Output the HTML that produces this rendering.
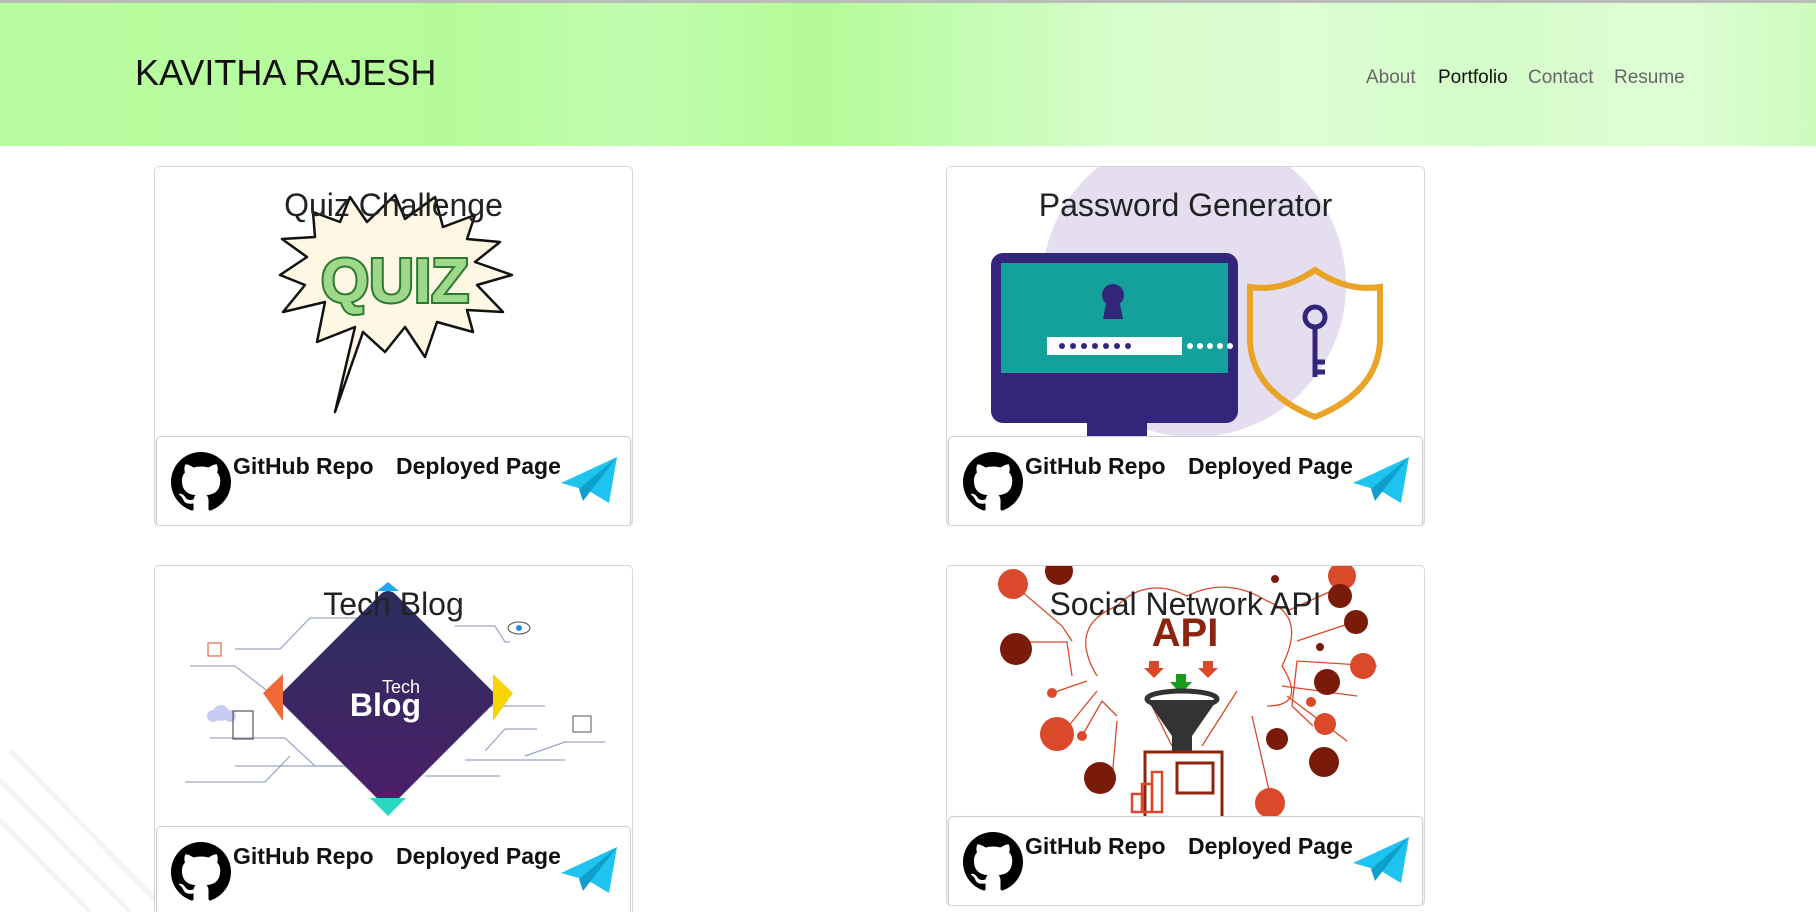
<!DOCTYPE html>
<html><head><meta charset="utf-8"><style>
*{margin:0;padding:0;box-sizing:border-box}
html,body{width:1816px;height:912px;overflow:hidden}
body{background:#fff;font-family:"Liberation Sans","DejaVu Sans",sans-serif;position:relative}
.hdr{position:absolute;left:0;top:0;width:1816px;height:146px;border-top:3px solid #b8bdb8;
background:linear-gradient(90deg,#b8fca0 0%,#b6fb9b 25%,#c2fcae 35%,#b4fb98 45%,#c8fcb8 55%,#d8fdcc 62%,#dcfed2 72%,#d4fcc8 82%,#e0fed6 92%,#cdfbbe 100%)}
.brand{position:absolute;left:135px;top:49px;font-size:36px;color:#111;letter-spacing:0}
.nav{position:absolute;top:64px;font-size:19px;color:#666}
.card{position:absolute;border:1px solid #d6d6d6;border-radius:5px;background:#fff;overflow:hidden}
.card svg.img{position:absolute;left:0;top:0}
.ttl{position:absolute;left:0;width:100%;top:20px;text-align:center;font-size:32px;color:#222}
.ft{position:absolute;left:1px;right:1px;height:91px;border:1px solid #ccc;border-radius:5px;background:#fff;box-shadow:0 1px 2px rgba(0,0,0,.15)}
.ft .gh{position:absolute;left:14px;top:15px}
.ft .t1,.ft .t2{position:absolute;top:16px;font-size:23px;font-weight:bold;color:#111}
.ft .t1{left:76px}.ft .t2{left:239px}
.ft .pl{position:absolute;left:404px;top:20px}
</style></head><body>
<svg width="0" height="0" style="position:absolute"><defs>
<path id="ghp" d="M8 0C3.580 0 0 3.58 0 8c0 3.54 2.29 6.53 5.47 7.59.4.07.55-.17.55-.38 0-.19-.01-.82-.01-1.49-2.01.37-2.53-.49-2.690-.94-.09-.23-.48-.94-.82-1.13-.28-.15-.68-.52-.01-.53.63-.01 1.08.58 1.23.82.72 1.21 1.87.87 2.33.66.07-.52.28-.87.51-1.07-1.78-.2-3.64-.89-3.64-3.95 0-.87.31-1.59.82-2.15-.08-.2-.36-1.02.08-2.12 0 0 .67-.21 2.2.82.64-.18 1.32-.27 2-.27.68 0 1.36.09 2 .27 1.53-1.04 2.2-.82 2.2-.82.44 1.1.16 1.92.08 2.12.51.56.82 1.27.82 2.15 0 3.07-1.87 3.75-3.65 3.95.29.25.54.73.54 1.48 0 1.07-.01 1.93-.01 2.2 0 .21.15.46.55.38A8.013 8.013 0 0016 8c0-4.42-3.58-8-8-8z"/>
</defs></svg>
<div class="hdr">
<div class="brand">KAVITHA RAJESH</div>
<div class="nav" style="left:1366px">About</div>
<div class="nav" style="left:1438px;color:#111">Portfolio</div>
<div class="nav" style="left:1528px">Contact</div>
<div class="nav" style="left:1614px">Resume</div>
</div>

<svg style="position:absolute;left:0;top:740px" width="160" height="172"><g stroke="#eee" stroke-width="5" opacity="0.6">
<line x1="0" y1="40" x2="130" y2="172"/><line x1="0" y1="80" x2="90" y2="172"/><line x1="10" y1="10" x2="160" y2="165"/></g></svg>

<!-- Card 1 -->
<div class="card" style="left:154px;top:166px;width:479px;height:360px">
<svg class="img" width="479" height="270">
<polygon points="180,245 200,160 162,175 170,135 128,145 150,118 125,108 152,90 127,72 160,70 158,45 185,55 195,30 212,55 240,28 250,52 280,30 288,60 320,48 312,72 345,75 320,95 357,108 322,118 348,145 312,143 318,165 282,155 270,190 250,160 230,185 208,165" fill="#fdf7e4" stroke="#111" stroke-width="2.5" stroke-linejoin="round"/>
<text x="240" y="135" text-anchor="middle" font-family="Liberation Sans" font-weight="bold" font-size="62" fill="#9ed88a" stroke="#2c7a32" stroke-width="4" paint-order="stroke">QUIZ</text>
</svg>
<div class="ttl">Quiz Challenge</div>
<div class="ft" style="top:269px">
<svg class="gh" width="60" height="60" viewBox="0 0 16 16"><use href="#ghp" fill="#000"/></svg>
<span class="t1">GitHub Repo</span><span class="t2">Deployed Page</span>
<svg class="pl" width="56" height="46"><polygon points="0,26 56,0 48,46 28,34" fill="#1ec3ef"/><polygon points="18,32 56,0 22,44" fill="#0e9fcc"/></svg>
</div></div>

<!-- Card 2 -->
<div class="card" style="left:946px;top:166px;width:479px;height:360px">
<svg class="img" width="479" height="270">
<circle cx="247" cy="118" r="152" fill="#e4def0"/>
<rect x="44" y="86" width="247" height="170" rx="12" fill="#33267a"/>
<rect x="54" y="96" width="227" height="110" fill="#14a19c"/>
<rect x="140" y="250" width="60" height="20" fill="#33267a"/>
<circle cx="166" cy="128" r="11" fill="#33267a"/><polygon points="160,132 172,132 176,152 156,152" fill="#33267a"/>
<rect x="100" y="170" width="135" height="18" fill="#fff"/>
<g fill="#33267a"><circle cx="115" cy="179" r="3"/><circle cx="126" cy="179" r="3"/><circle cx="137" cy="179" r="3"/><circle cx="148" cy="179" r="3"/><circle cx="159" cy="179" r="3"/><circle cx="170" cy="179" r="3"/><circle cx="181" cy="179" r="3"/></g>
<g fill="#fff"><circle cx="243" cy="179" r="3"/><circle cx="253" cy="179" r="3"/><circle cx="263" cy="179" r="3"/><circle cx="273" cy="179" r="3"/><circle cx="283" cy="179" r="3"/></g>
<path d="M368,103 Q400,125 433,120 L433,175 Q430,225 368,250 Q306,225 303,175 L303,120 Q336,125 368,103Z" fill="none" stroke="#e9a326" stroke-width="6"/>
<circle cx="368" cy="150" r="10" fill="none" stroke="#33267a" stroke-width="5"/><line x1="368" y1="160" x2="368" y2="210" stroke="#33267a" stroke-width="5"/><line x1="368" y1="195" x2="378" y2="195" stroke="#33267a" stroke-width="5"/><line x1="368" y1="205" x2="378" y2="205" stroke="#33267a" stroke-width="5"/>
</svg>
<div class="ttl">Password Generator</div>
<div class="ft" style="top:269px">
<svg class="gh" width="60" height="60" viewBox="0 0 16 16"><use href="#ghp" fill="#000"/></svg>
<span class="t1">GitHub Repo</span><span class="t2">Deployed Page</span>
<svg class="pl" width="56" height="46"><polygon points="0,26 56,0 48,46 28,34" fill="#1ec3ef"/><polygon points="18,32 56,0 22,44" fill="#0e9fcc"/></svg>
</div></div>

<!-- Card 3 -->
<div class="card" style="left:154px;top:565px;width:479px;height:347px;border-bottom:none;border-radius:5px 5px 0 0">
<svg class="img" width="479" height="262">
<defs><linearGradient id="dg" x1="0" y1="0" x2="0" y2="1"><stop offset="0" stop-color="#2c2d5e"/><stop offset="1" stop-color="#4a2068"/></linearGradient></defs>
<g stroke="#9aa3c8" stroke-width="1.2" fill="none">
<path d="M80,83 L125,83 L155,52 L210,52"/><path d="M35,100 L80,100 L145,150"/><path d="M55,172 L130,172 L160,200 L240,200"/><path d="M80,200 L200,200"/><path d="M30,216 L110,216 L135,190"/>
<path d="M300,60 L340,60 L350,76 L355,76"/><path d="M320,140 L390,140"/><path d="M330,185 L350,163 L382,163"/><path d="M310,194 L410,194"/><path d="M370,190 L410,176 L450,176"/><path d="M270,210 L345,210"/></g>
<polygon points="233,35 330,132 233,229 136,132" fill="url(#dg)" stroke="url(#dg)" stroke-width="20" stroke-linejoin="round"/>
<polygon points="108,127 128,108 128,155" fill="#ef6a37"/><polygon points="338,108 358,127 338,155" fill="#f7d400"/>
<polygon points="222,25 233,16 244,25" fill="#21a6f0"/><polygon points="215,232 251,232 233,250" fill="#2ad7c2"/>
<text x="265" y="127" text-anchor="end" font-size="18" fill="#fff" font-family="Liberation Sans">Tech</text>
<text x="266" y="150" text-anchor="end" font-size="32" font-weight="bold" fill="#fff" font-family="Liberation Sans">Blog</text>
<g fill="#c8cbf2"><circle cx="66" cy="147" r="8"/><circle cx="58" cy="150" r="6"/><circle cx="75" cy="150" r="6"/></g>
<rect x="78" y="145" width="20" height="28" fill="none" stroke="#555" stroke-width="1.2"/>
<rect x="53" y="77" width="13" height="13" fill="none" stroke="#e06a4a" stroke-width="1.2"/>
<ellipse cx="364" cy="62" rx="11" ry="6" fill="none" stroke="#444"/><circle cx="364" cy="62" r="3" fill="#1d8fd8"/>
<rect x="418" y="150" width="18" height="16" fill="none" stroke="#555"/>
</svg>
<div class="ttl">Tech Blog</div>
<div class="ft" style="top:260px;height:87px;border-bottom:none;border-radius:5px 5px 0 0;box-shadow:none">
<svg class="gh" width="60" height="60" viewBox="0 0 16 16"><use href="#ghp" fill="#000"/></svg>
<span class="t1">GitHub Repo</span><span class="t2">Deployed Page</span>
<svg class="pl" width="56" height="46"><polygon points="0,26 56,0 48,46 28,34" fill="#1ec3ef"/><polygon points="18,32 56,0 22,44" fill="#0e9fcc"/></svg>
</div></div>

<!-- Card 4 -->
<div class="card" style="left:946px;top:565px;width:479px;height:341px">
<svg class="img" width="479" height="252">
<g stroke="#d9492a" stroke-width="1.3" fill="none">
<path d="M150,110 Q120,60 170,40 Q200,10 240,30 Q280,10 320,35 Q360,50 335,100 Q360,140 320,140"/>
<path d="M66,18 L115,60 L125,75"/><path d="M70,76 L120,76 L125,110"/><path d="M105,127 L140,115"/><path d="M115,168 L150,125"/><path d="M135,170 L155,135 L170,150"/><path d="M165,213 L170,155"/>
<path d="M400,18 L340,45"/><path d="M410,55 L350,75"/><path d="M430,100 L350,95 L345,140"/><path d="M410,130 L335,120"/><path d="M400,175 L340,130"/><path d="M325,237 L305,150"/><path d="M366,160 L345,140"/><path d="M225,180 L200,130"/><path d="M255,180 L290,125"/></g>
<g fill="#d9492a"><circle cx="66" cy="18" r="15"/><circle cx="110" cy="168" r="17"/><circle cx="105" cy="127" r="5"/><circle cx="135" cy="170" r="5"/><circle cx="416" cy="100" r="13"/><circle cx="378" cy="158" r="11"/><circle cx="364" cy="136" r="5"/><circle cx="323" cy="237" r="15"/><circle cx="395" cy="10" r="14"/></g>
<g fill="#7a1a08"><circle cx="112" cy="5" r="14"/><circle cx="69" cy="83" r="16"/><circle cx="153" cy="212" r="16"/><circle cx="380" cy="116" r="13"/><circle cx="393" cy="30" r="12"/><circle cx="409" cy="56" r="12"/><circle cx="330" cy="173" r="11"/><circle cx="377" cy="196" r="15"/><circle cx="328" cy="13" r="4"/><circle cx="373" cy="81" r="4"/></g>
<text x="238" y="80" text-anchor="middle" font-family="Liberation Sans" font-weight="bold" font-size="40" fill="#8c2410">API</text>
<polygon points="202,95 212,95 212,102 217,102 207,112 197,102 202,102" fill="#d9492a"/><polygon points="256,95 266,95 266,102 271,102 261,112 251,102 256,102" fill="#d9492a"/>
<polygon points="229,108 239,108 239,116 245,116 234,128 223,116 229,116" fill="#1a9a1a"/>
<ellipse cx="235" cy="133" rx="35" ry="8" fill="none" stroke="#333" stroke-width="5"/>
<polygon points="200,134 270,134 245,170 245,185 225,185 225,170" fill="#333"/>
<rect x="198" y="186" width="77" height="66" fill="none" stroke="#8c2410" stroke-width="3"/>
<rect x="230" y="197" width="36" height="30" fill="none" stroke="#8c2410" stroke-width="3"/>
<g fill="none" stroke="#d9492a" stroke-width="2.5"><rect x="185" y="228" width="10" height="18"/><rect x="195" y="218" width="10" height="28"/><rect x="205" y="206" width="10" height="40"/></g>
</svg>
<div class="ttl">Social Network API</div>
<div class="ft" style="top:250px">
<svg class="gh" width="60" height="60" viewBox="0 0 16 16"><use href="#ghp" fill="#000"/></svg>
<span class="t1">GitHub Repo</span><span class="t2">Deployed Page</span>
<svg class="pl" width="56" height="46"><polygon points="0,26 56,0 48,46 28,34" fill="#1ec3ef"/><polygon points="18,32 56,0 22,44" fill="#0e9fcc"/></svg>
</div></div>
</body></html>
